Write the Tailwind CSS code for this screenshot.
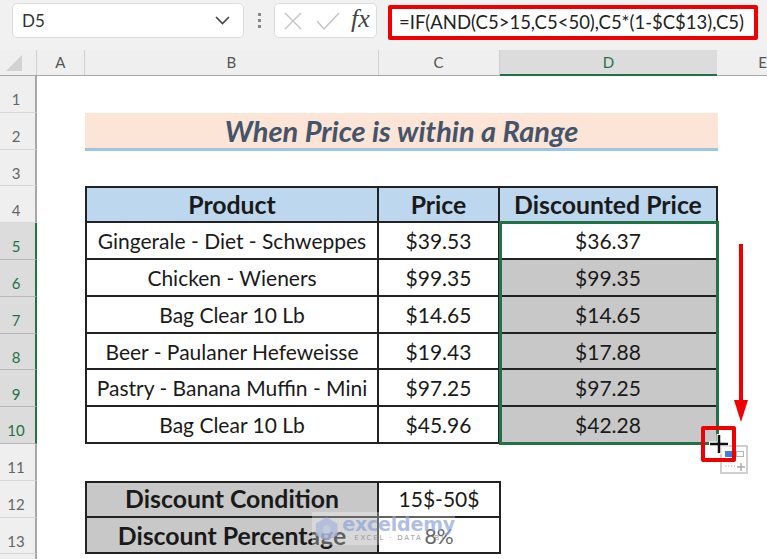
<!DOCTYPE html>
<html>

<head>
  <meta charset="UTF-8">
  <meta name="viewport" content="width=device-width, initial-scale=1.0">
  <script src="https://cdn.jsdelivr.net/npm/@tailwindcss/browser@4"></script>
</head>

<body class="bg-white">
  <div class="relative w-[767px] h-[559px] overflow-hidden bg-white font-['Lato','Open_Sans',sans-serif] text-[#1a1a1a]">

    <!-- formula bar -->
    <div class="h-[50px] bg-[#f1f1f1] flex items-start pt-[3px] pl-[12px]">
      <div class="w-[232px] h-[35px] bg-white border border-[#dcdcdc] rounded-[5px] flex items-center justify-between pl-[9px] pr-[13px] text-[17px] text-[#333]">
        <span>D5</span>
        <svg width="15" height="9" viewBox="0 0 15 9" fill="none" stroke="#444" stroke-width="1.6"><path d="M1 1l6.500 6.500L14 1" /></svg>
      </div>
      <div class="w-[30px] h-[35px] flex flex-col items-center justify-center gap-[3px]">
        <span class="w-[3px] h-[3px] bg-[#888]"></span>
        <span class="w-[3px] h-[3px] bg-[#888]"></span>
        <span class="w-[3px] h-[3px] bg-[#888]"></span>
      </div>
      <div class="w-[103px] h-[35px] bg-white border border-[#dcdcdc] rounded-[5px] flex items-center pl-[9px] gap-[14px]">
        <svg width="18" height="18" viewBox="0 0 18 18" fill="none" stroke="#c4c4c4" stroke-width="1.400"><path d="M1 1l16 16M17 1L1 17" /></svg>
        <svg width="24" height="18" viewBox="0 0 24 18" fill="none" stroke="#c4c4c4" stroke-width="1.400"><path d="M1 9l7 8L23 1" /></svg>
        <span class="font-['Liberation_Serif',serif] italic text-[26px] leading-none text-[#444] -ml-[3px] -mt-[3px]">fx</span>
      </div>
      <div class="ml-[11px] w-[370px] h-[35px] mt-[2px] bg-white border-[4px] border-[#f00000] rounded-[2px] flex items-center pl-[7px] text-[18.500px] whitespace-nowrap text-[#222]">=IF(AND(C5&gt;15,C5&lt;50),C5*(1-$C$13),C5)</div>
    </div>

    <!-- column headers -->
    <div class="flex h-[26px] bg-[#efefef] border-b border-[#a8a8a8] text-[15px] text-[#555] leading-[24px] text-center">
      <div class="w-[37px] flex justify-center items-center border-r border-[#d0d0d0]">
        <svg width="17" height="17" viewBox="0 0 17 17" class="-ml-[6px]"><path d="M16 1v16H0z" fill="#d2d2d2" /></svg>
      </div>
      <div class="w-[48px] border-r border-[#d0d0d0]">A</div>
      <div class="w-[294px] border-r border-[#d0d0d0]">B</div>
      <div class="w-[121px] border-r border-[#d0d0d0]">C</div>
      <div class="w-[218px] bg-[#dcdcdc] border-b-[2px] border-[#217346] text-[#217346] h-[26px]">D</div>
      <div class="flex-1 text-left pl-[41px]">E</div>
    </div>

    <!-- sheet -->
    <div class="text-[21px] text-center">
      <div class="flex h-[36.8px]">
        <div class="w-[37px] bg-[#efefef] border-r-2 border-[#a8a8a8] border-b border-b-[#d8d8d8] text-[15px] text-[#666] flex items-end justify-center pr-[3px] pb-[1px]">1</div>
      </div>
      <div class="flex h-[36.8px]">
        <div class="w-[37px] bg-[#efefef] border-r-2 border-[#a8a8a8] border-b border-b-[#d8d8d8] text-[15px] text-[#666] flex items-end justify-center pr-[3px] pb-[1px]">2</div>
        <div class="w-[48px]"></div>
        <div class="w-[633px] h-[38px] bg-[#fce4d6] border-b-[3px] border-[#9dc3e6] font-bold italic text-[29px] text-[#44546a] leading-[36px]">When Price is within a Range</div>
      </div>
      <div class="flex h-[36.8px]">
        <div class="w-[37px] bg-[#efefef] border-r-2 border-[#a8a8a8] border-b border-b-[#d8d8d8] text-[15px] text-[#666] flex items-end justify-center pr-[3px] pb-[1px]">3</div>
      </div>

      <div class="flex h-[36.8px]">
        <div class="w-[37px] bg-[#efefef] border-r-2 border-[#a8a8a8] border-b border-b-[#d8d8d8] text-[15px] text-[#666] flex items-end justify-center pr-[3px] pb-[1px]">4</div>
        <div class="w-[48px]"></div>
        <div class="w-[294px] border-l-2 border-t-2 border-r-2 border-b-2 border-[#222] bg-[#bdd7ee] font-bold text-[24.800px] leading-[33px]">Product</div>
        <div class="w-[121px] border-t-2 border-r-2 border-b-2 border-[#222] bg-[#bdd7ee] font-bold text-[24.800px] leading-[33px]">Price</div>
        <div class="w-[218px] border-t-2 border-r-2 border-b-2 border-[#222] bg-[#bdd7ee] font-bold text-[24.800px] leading-[33px]">Discounted Price</div>
      </div>

      <div class="flex h-[36.8px]">
        <div class="w-[37px] bg-[#dcdcdc] border-r-[2px] border-[#217346] border-b border-b-[#b8b8b8] text-[15px] text-[#217346] flex items-end justify-center pr-[3px] pb-[1px]">5</div>
        <div class="w-[48px]"></div>
        <div class="w-[294px] border-l-2 border-r-2 border-b-2 border-[#222] leading-[36px] whitespace-nowrap">Gingerale - Diet - Schweppes</div>
        <div class="w-[121px] border-r-2 border-b-2 border-[#222] leading-[36px]">$39.53</div>
        <div class="w-[218px] border-r-2 border-b-2 border-[#222] leading-[36px]">$36.37</div>
      </div>
      <div class="flex h-[36.8px]">
        <div class="w-[37px] bg-[#dcdcdc] border-r-[2px] border-[#217346] border-b border-b-[#b8b8b8] text-[15px] text-[#217346] flex items-end justify-center pr-[3px] pb-[1px]">6</div>
        <div class="w-[48px]"></div>
        <div class="w-[294px] border-l-2 border-r-2 border-b-2 border-[#222] leading-[36px] whitespace-nowrap">Chicken - Wieners</div>
        <div class="w-[121px] border-r-2 border-b-2 border-[#222] leading-[36px]">$99.35</div>
        <div class="w-[218px] border-r-2 border-b-2 border-[#222] bg-[#c8c8c8] leading-[36px]">$99.35</div>
      </div>
      <div class="flex h-[36.8px]">
        <div class="w-[37px] bg-[#dcdcdc] border-r-[2px] border-[#217346] border-b border-b-[#b8b8b8] text-[15px] text-[#217346] flex items-end justify-center pr-[3px] pb-[1px]">7</div>
        <div class="w-[48px]"></div>
        <div class="w-[294px] border-l-2 border-r-2 border-b-2 border-[#222] leading-[36px] whitespace-nowrap">Bag Clear 10 Lb</div>
        <div class="w-[121px] border-r-2 border-b-2 border-[#222] leading-[36px]">$14.65</div>
        <div class="w-[218px] border-r-2 border-b-2 border-[#222] bg-[#c8c8c8] leading-[36px]">$14.65</div>
      </div>
      <div class="flex h-[36.8px]">
        <div class="w-[37px] bg-[#dcdcdc] border-r-[2px] border-[#217346] border-b border-b-[#b8b8b8] text-[15px] text-[#217346] flex items-end justify-center pr-[3px] pb-[1px]">8</div>
        <div class="w-[48px]"></div>
        <div class="w-[294px] border-l-2 border-r-2 border-b-2 border-[#222] leading-[36px] whitespace-nowrap">Beer - Paulaner Hefeweisse</div>
        <div class="w-[121px] border-r-2 border-b-2 border-[#222] leading-[36px]">$19.43</div>
        <div class="w-[218px] border-r-2 border-b-2 border-[#222] bg-[#c8c8c8] leading-[36px]">$17.88</div>
      </div>
      <div class="flex h-[36.8px]">
        <div class="w-[37px] bg-[#dcdcdc] border-r-[2px] border-[#217346] border-b border-b-[#b8b8b8] text-[15px] text-[#217346] flex items-end justify-center pr-[3px] pb-[1px]">9</div>
        <div class="w-[48px]"></div>
        <div class="w-[294px] border-l-2 border-r-2 border-b-2 border-[#222] leading-[36px] whitespace-nowrap">Pastry - Banana Muffin - Mini</div>
        <div class="w-[121px] border-r-2 border-b-2 border-[#222] leading-[36px]">$97.25</div>
        <div class="w-[218px] border-r-2 border-b-2 border-[#222] bg-[#c8c8c8] leading-[36px]">$97.25</div>
      </div>
      <div class="flex h-[36.8px]">
        <div class="w-[37px] bg-[#dcdcdc] border-r-[2px] border-[#217346] border-b border-b-[#b8b8b8] text-[15px] text-[#217346] flex items-end justify-center pr-[3px] pb-[1px]">10</div>
        <div class="w-[48px]"></div>
        <div class="w-[294px] border-l-2 border-r-2 border-b-2 border-[#222] leading-[36px] whitespace-nowrap">Bag Clear 10 Lb</div>
        <div class="w-[121px] border-r-2 border-b-2 border-[#222] leading-[36px]">$45.96</div>
        <div class="w-[218px] border-r-2 border-b-2 border-[#222] bg-[#c8c8c8] leading-[36px]">$42.28</div>
      </div>

      <div class="flex h-[36.8px]">
        <div class="w-[37px] bg-[#efefef] border-r-2 border-[#a8a8a8] border-b border-b-[#d8d8d8] text-[15px] text-[#666] flex items-end justify-center pr-[3px] pb-[1px]">11</div>
      </div>
      <div class="flex h-[36.8px]">
        <div class="w-[37px] bg-[#efefef] border-r-2 border-[#a8a8a8] border-b border-b-[#d8d8d8] text-[15px] text-[#666] flex items-end justify-center pr-[3px] pb-[1px]">12</div>
        <div class="w-[48px]"></div>
        <div class="w-[294px] border-l-2 border-t-2 border-r-2 border-b-2 border-[#222] bg-[#c8c8c8] font-bold text-[24.800px] leading-[32px]">Discount Condition</div>
        <div class="w-[122px] border-t-2 border-r-2 border-b-2 border-[#222] leading-[32px]">15$-50$</div>
      </div>
      <div class="flex h-[36.8px]">
        <div class="w-[37px] bg-[#efefef] border-r-2 border-[#a8a8a8] border-b border-b-[#d8d8d8] text-[15px] text-[#666] flex items-end justify-center pr-[3px] pb-[1px]">13</div>
        <div class="w-[48px]"></div>
        <div class="w-[294px] border-l-2 border-r-2 border-b-2 border-[#222] bg-[#c8c8c8] font-bold text-[24.800px] leading-[35px]">Discount Percentage</div>
        <div class="w-[122px] border-r-2 border-b-2 border-[#222] leading-[35px]">8%</div>
      </div>
      <div class="flex h-[6px]">
        <div class="w-[37px] bg-[#efefef] border-r-2 border-[#a8a8a8]"></div>
      </div>
    </div>

    <!-- selection around D5:D10 -->
    <div class="absolute left-[499px] top-[221px] w-[220px] h-[224px] border-[3px] border-[#217346]"></div>

    <!-- drag arrow -->
    <svg class="absolute left-[732px] top-[244px]" width="18" height="178" viewBox="0 0 18 178"><path d="M7 0h4v158H7z" fill="#f00000" /><path d="M2 156h14l-7 22z" fill="#f00000" /></svg>

    <!-- autofill options button -->
    <div class="absolute left-[720px] top-[445px] w-[28px] h-[29px] bg-white border-2 border-[#cfcfcf]">
      <svg class="absolute left-0 top-0" width="24" height="25" viewBox="0 0 24 25" fill="none">
        <rect x="3" y="4" width="7" height="6" fill="#3d7de0" />
        <rect x="14.500" y="4.500" width="7" height="5" stroke="#b4b4b4" />
        <path d="M3 19h10" stroke="#b4b4b4" stroke-dasharray="1.500 1.500" />
        <path d="M15 20h8M19 16v8" stroke="#a8a8a8" stroke-width="1.400" />
      </svg>
    </div>

    <!-- fill handle cursor -->
    <div class="absolute left-[701px] top-[426px] w-[35px] h-[36px] border-[4px] border-[#f00000] rounded-[2px]"></div>
    <svg class="absolute left-[708px] top-[433px]" width="22" height="22" viewBox="0 0 22 22"><path d="M11 1v20M1 11h20" stroke="#fff" stroke-width="5" /><path d="M11 2v18M2 11h18" stroke="#111" stroke-width="2.500" /></svg>

    <!-- watermark -->
    <div class="absolute left-[312px] top-[512px] w-[143px] h-[33px] bg-white/30 flex items-center pl-[3px] gap-[4px]">
      <svg width="26" height="28" viewBox="0 0 26 28"><path d="M13 1L25 8v13L13 27 1 21V8z" fill="#a9b6dc" opacity="0.75" /><path d="M9 12l4-3 4 3v7H9z" fill="#c6cbdc" /></svg>
      <div class="text-left leading-none">
        <div class="font-['DejaVu_Sans',sans-serif] font-bold text-[19px] tracking-[-0.2px] text-[#8ea3da] opacity-70">exceldemy</div>
        <div class="font-['DejaVu_Sans',sans-serif] text-[7px] tracking-[1.800px] text-[#9a9a9a] ml-[12px] mt-[1px]">EXCEL · DATA · BI</div>
      </div>
    </div>
  </div>
</body>

</html>
